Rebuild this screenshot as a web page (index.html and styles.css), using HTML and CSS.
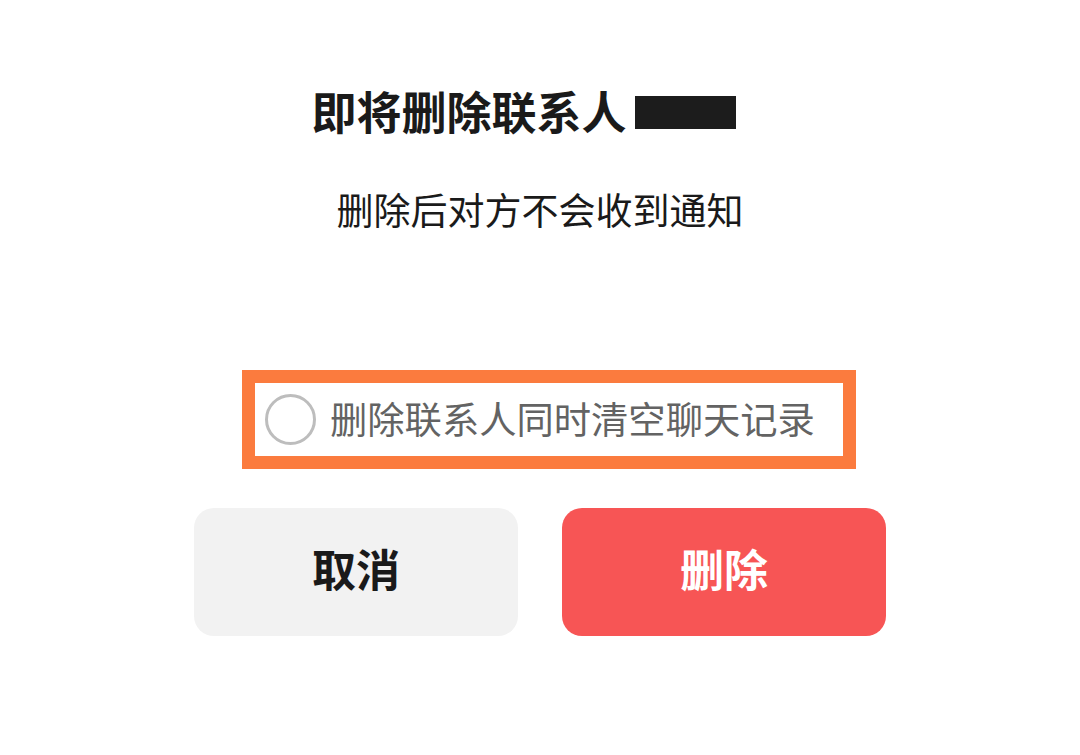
FILE: index.html
```html
<!DOCTYPE html>
<html lang="zh">
<head>
<meta charset="utf-8">
<link rel="stylesheet" href="styles.css">
</head>
<body>
<div class="dialog">
  <div class="title-row">
    <span class="title">即将删除联系人</span>
    <span class="redact"></span>
  </div>
  <div class="subtitle">删除后对方不会收到通知</div>
  <div class="option">
    <span class="radio"></span>
    <span class="option-text">删除联系人同时清空聊天记录</span>
  </div>
  <div class="actions">
    <div class="btn btn-cancel">取消</div>
    <div class="btn btn-delete">删除</div>
  </div>
</div>
</body>
</html>
```
FILE: styles.css
```css
html, body {
  margin: 0;
  padding: 0;
  background: #ffffff;
}
body {
  width: 1080px;
  height: 755px;
  overflow: hidden;
  font-family: "Noto Sans CJK SC", "Noto Sans", sans-serif;
}
.dialog {
  display: flex;
  flex-direction: column;
  align-items: center;
  padding-top: 86px;
}
.title-row {
  display: flex;
  align-items: center;
  gap: 8px;
  padding-right: 33px;
  height: 50px;
}
.title {
  font-size: 45px;
  font-weight: 700;
  color: #1a1a1a;
  line-height: 50px;
}
.redact {
  width: 101px;
  height: 33px;
  background: #1c1c1c;
  margin-top: 3px;
}
.subtitle {
  margin-top: 48px;
  font-size: 37px;
  line-height: 50px;
  color: #1a1a1a;
}
.option {
  margin-top: 136px;
  margin-left: 18px;
  width: 578px;
  height: 73px;
  border: 13px solid #fb7b3e;
  display: flex;
  align-items: center;
  padding-left: 10px;
  box-sizing: content-box;
}
.radio {
  width: 45px;
  height: 45px;
  border: 3px solid #bdbdbd;
  border-radius: 50%;
  flex: none;
}
.option-text {
  margin-left: 14px;
  font-size: 37.3px;
  color: #636363;
  line-height: 50px;
  margin-top: -4px;
}
.actions {
  margin-top: 39px;
  display: flex;
  gap: 44px;
}
.btn {
  width: 324px;
  height: 128px;
  border-radius: 20px;
  display: flex;
  align-items: center;
  justify-content: center;
  font-size: 44px;
  font-weight: 700;
  box-sizing: border-box;
  padding-bottom: 8px;
}
.btn-cancel {
  background: #f2f2f2;
  color: #1a1a1a;
}
.btn-delete {
  background: #f75555;
  color: #ffffff;
}
```
